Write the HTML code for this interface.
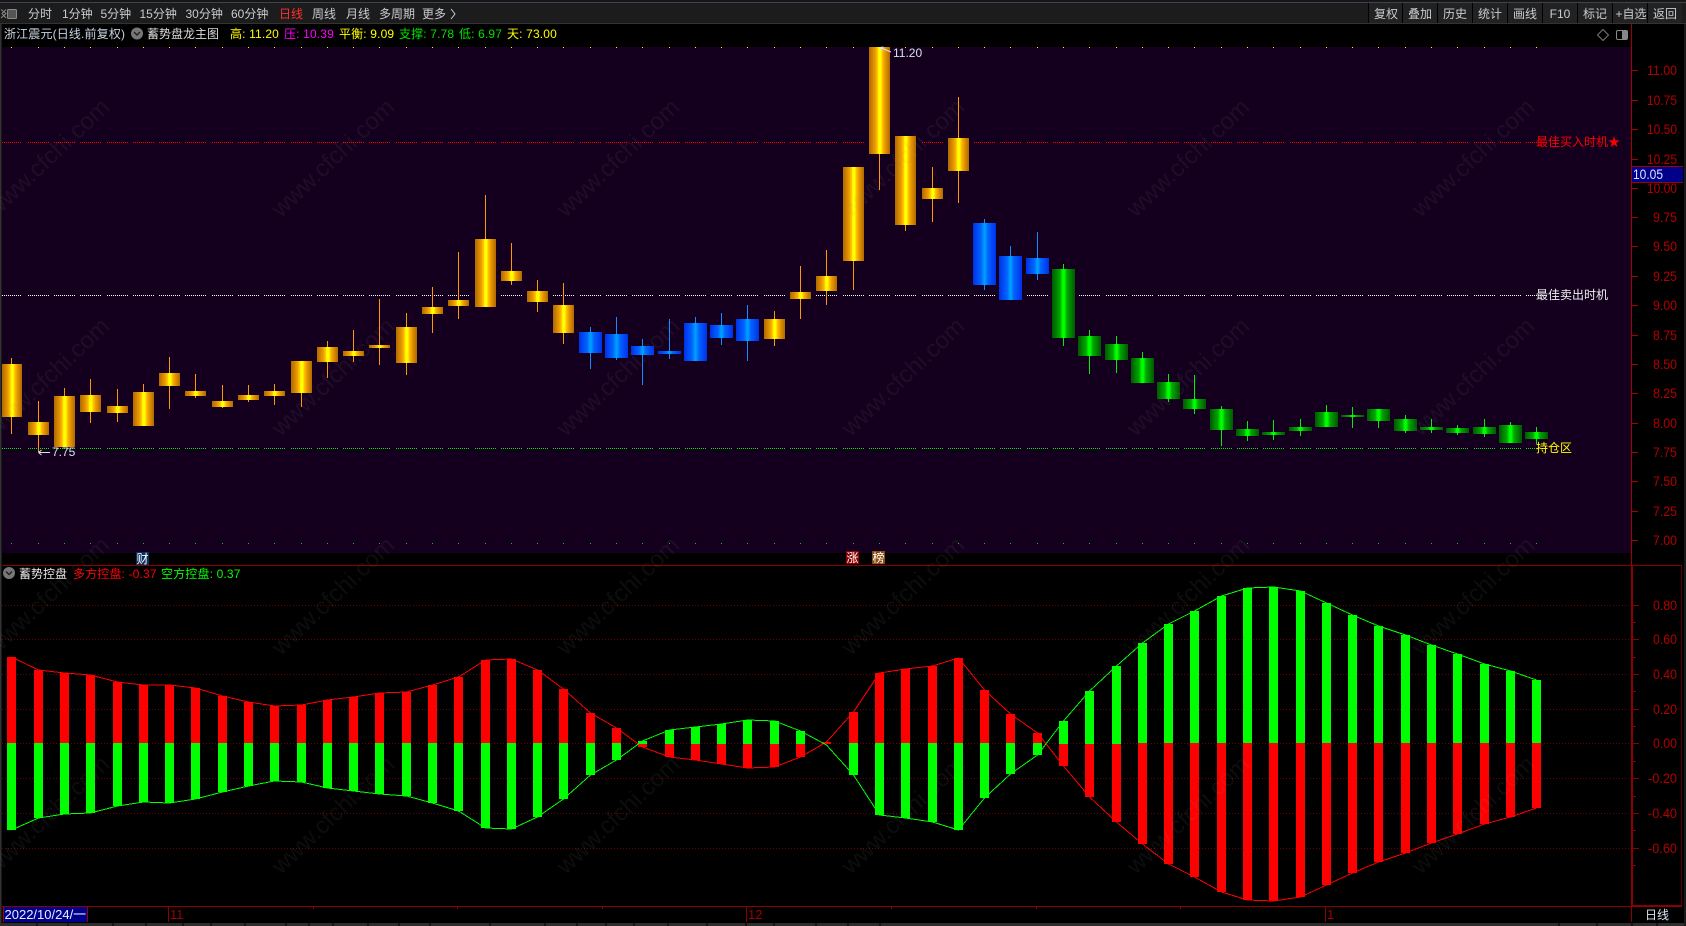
<!DOCTYPE html>
<html lang="zh-CN"><head><meta charset="utf-8"><title>浙江震元 K线</title>
<style>
html,body{margin:0;padding:0;background:#000;width:1686px;height:926px;overflow:hidden}
svg{display:block}
text{font-family:"Liberation Sans","Noto Sans CJK SC",sans-serif;font-size:12px}
.tb{fill:#c8ccd0}
.hd{letter-spacing:.15px}
.ax{fill:#b00000;font-size:14px;text-anchor:end}
.btn{fill:#c8ccd0;text-anchor:middle}
.wm text{font-size:24px;fill:rgba(140,140,140,.095);text-anchor:end}
</style></head><body>
<svg width="1686" height="926" viewBox="0 0 1686 926" xmlns="http://www.w3.org/2000/svg">
<defs>
<linearGradient id="o" x1="0" x2="1" y1="0" y2="0"><stop offset="0" stop-color="#b06800"/><stop offset=".28" stop-color="#e89800"/><stop offset=".4" stop-color="#ffc000"/><stop offset=".46" stop-color="#ffff00"/><stop offset=".56" stop-color="#ffff00"/><stop offset=".64" stop-color="#ffc000"/><stop offset=".76" stop-color="#e89800"/><stop offset="1" stop-color="#b06800"/></linearGradient>
<linearGradient id="b" x1="0" x2="1" y1="0" y2="0"><stop offset="0" stop-color="#0030e8"/><stop offset=".35" stop-color="#0064ff"/><stop offset=".5" stop-color="#00a4ff"/><stop offset=".65" stop-color="#0064ff"/><stop offset="1" stop-color="#0030e8"/></linearGradient>
<linearGradient id="g" x1="0" x2="1" y1="0" y2="0"><stop offset="0" stop-color="#005800"/><stop offset=".35" stop-color="#00a800"/><stop offset=".46" stop-color="#00ff00"/><stop offset=".54" stop-color="#00ff00"/><stop offset=".65" stop-color="#00a800"/><stop offset="1" stop-color="#005800"/></linearGradient>
<path id="seg" fill="none" stroke-dasharray="1 1" shape-rendering="crispEdges" d="M2 .5h20M28 .5h21M54 .5h21M80 .5h21M107 .5h21M133 .5h21M159 .5h21M185 .5h21M212 .5h21M238 .5h21M264 .5h21M291 .5h21M317 .5h21M343 .5h21M369 .5h21M396 .5h21M422 .5h21M448 .5h21M475 .5h21M501 .5h21M527 .5h21M553 .5h21M580 .5h21M606 .5h21M632 .5h21M659 .5h21M685 .5h21M711 .5h21M737 .5h21M764 .5h21M790 .5h21M816 .5h21M843 .5h21M869 .5h21M895 .5h21M922 .5h21M948 .5h21M974 .5h21M1000 .5h21M1027 .5h21M1053 .5h21M1079 .5h21M1106 .5h21M1132 .5h21M1158 .5h21M1184 .5h21M1211 .5h21M1237 .5h21M1263 .5h21M1290 .5h21M1316 .5h21M1342 .5h21M1368 .5h21M1395 .5h21M1421 .5h21M1447 .5h21M1474 .5h21M1500 .5h21M1526 .5h21"/>
<path id="dots" fill="none" shape-rendering="crispEdges" d="M11 .5h1M38 .5h1M64 .5h1M90 .5h1M117 .5h1M143 .5h1M169 .5h1M195 .5h1M222 .5h1M248 .5h1M274 .5h1M301 .5h1M327 .5h1M353 .5h1M379 .5h1M406 .5h1M432 .5h1M458 .5h1M485 .5h1M511 .5h1M537 .5h1M563 .5h1M590 .5h1M616 .5h1M642 .5h1M669 .5h1M695 .5h1M721 .5h1M747 .5h1M774 .5h1M800 .5h1M826 .5h1M853 .5h1M879 .5h1M905 .5h1M932 .5h1M958 .5h1M984 .5h1M1010 .5h1M1037 .5h1M1063 .5h1M1089 .5h1M1116 .5h1M1142 .5h1M1168 .5h1M1194 .5h1M1221 .5h1M1247 .5h1M1273 .5h1M1300 .5h1M1326 .5h1M1352 .5h1M1378 .5h1M1405 .5h1M1431 .5h1M1457 .5h1M1484 .5h1M1510 .5h1M1536 .5h1"/>
</defs>

<rect width="1686" height="926" fill="#000"/>
<!-- top toolbar -->
<rect y="0" width="1686" height="2" fill="#161616"/>
<rect y="2" width="1686" height="1" fill="#3a4550"/>
<rect y="3" width="1686" height="20" fill="#1c1c1c"/>
<rect y="23" width="1686" height="1" fill="#333"/>
<path d="M1 9.5l5 4-5 4.5M6 9.5l-4 4 4 4.5" fill="none" stroke="#8a8a8a"/>
<rect x="7.5" y="9.5" width="9" height="9" rx="1" fill="#555" stroke="#8a8a8a"/>
<text class="tb" x="28" y="18">分时</text>
<text class="tb" x="62" y="18">1分钟</text>
<text class="tb" x="100.5" y="18">5分钟</text>
<text class="tb" x="139.5" y="18">15分钟</text>
<text class="tb" x="185.5" y="18">30分钟</text>
<text class="tb" x="231" y="18">60分钟</text>
<text x="279" y="18" fill="#ff3030">日线</text>
<text class="tb" x="312" y="18">周线</text>
<text class="tb" x="346" y="18">月线</text>
<text class="tb" x="379" y="18">多周期</text>
<text class="tb" x="422" y="18">更多</text>
<path d="M451 9l4 5-4 5" fill="none" stroke="#c8ccd0"/>
<g fill="#222">
<rect x="1369" y="3" width="33" height="20"/><rect x="1403" y="3" width="34" height="20"/><rect x="1438" y="3" width="34" height="20"/><rect x="1473" y="3" width="34" height="20"/><rect x="1508" y="3" width="34" height="20"/><rect x="1543" y="3" width="34" height="20"/><rect x="1578" y="3" width="34" height="20"/><rect x="1613" y="3" width="34" height="20"/><rect x="1648" y="3" width="34" height="20"/>
</g>
<g fill="#000"><rect x="1368" y="3" width="1" height="20"/><rect x="1402" y="3" width="1" height="20"/><rect x="1437" y="3" width="1" height="20"/><rect x="1472" y="3" width="1" height="20"/><rect x="1507" y="3" width="1" height="20"/><rect x="1542" y="3" width="1" height="20"/><rect x="1577" y="3" width="1" height="20"/><rect x="1612" y="3" width="1" height="20"/><rect x="1647" y="3" width="1" height="20"/></g>
<text class="btn" x="1386" y="18">复权</text>
<text class="btn" x="1420" y="18">叠加</text>
<text class="btn" x="1455" y="18">历史</text>
<text class="btn" x="1490" y="18">统计</text>
<text class="btn" x="1525" y="18">画线</text>
<text class="btn" x="1560" y="18">F10</text>
<text class="btn" x="1595" y="18">标记</text>
<text class="btn" x="1631" y="18">+自选</text>
<text class="btn" x="1665" y="18">返回</text>

<!-- frame + panels -->
<rect x="0" y="24" width="1.5" height="902" fill="#333"/>
<rect x="2" y="47" width="1630" height="506" fill="#14001e"/>

<!-- header row -->
<text class="hd" x="4" y="38" fill="#c8d4e0">浙江震元(日线.前复权)</text>
<circle cx="137" cy="33.5" r="6" fill="#777"/><path d="M134 32l3 3 3-3" fill="none" stroke="#222" stroke-width="1.4"/>
<text x="147" y="38" fill="#dcdcdc">蓄势盘龙主图</text>
<text class="hd" x="230" y="38" fill="#ffff00">高: 11.20</text>
<text class="hd" x="284" y="38" fill="#ff00ff">压: 10.39</text>
<text class="hd" x="339" y="38" fill="#ffff00">平衡: 9.09</text>
<text class="hd" x="399" y="38" fill="#00e000">支撑: 7.78</text>
<text class="hd" x="459" y="38" fill="#00e000">低: 6.97</text>
<text class="hd" x="507" y="38" fill="#ffff00">天: 73.00</text>
<path d="M1603 29.5l5.5 5.5-5.5 5.5-5.5-5.5z" fill="none" stroke="#777"/>
<rect x="1616.5" y="30.5" width="11" height="9" rx="1.5" fill="none" stroke="#888"/><rect x="1622" y="31" width="5" height="8" fill="#888"/>

<!-- horizontal signal lines -->
<use href="#seg" y="142" stroke="#ff0000"/>
<use href="#seg" y="295" stroke="#ffffff"/>
<use href="#seg" y="448" stroke="#00f000"/>
<use href="#dots" y="47" stroke="#ffff00"/>
<use href="#dots" y="543" stroke="#00d000"/>

<!-- wicks -->
<path fill="none" stroke="#ff9900" d="M11.5 358V434M38.5 401V452M64.5 388V447M90.5 379V423M117.5 389V422M143.5 384V426M169.5 357V409M195.5 374V398M222.5 385V408M248.5 385V402M274.5 384V405M301.5 361V407M327.5 341V378M353.5 330V362M379.5 299V365M406.5 313V375M432.5 287V333M458.5 252V319M485.5 195V307M511.5 243V285M537.5 280V312M563.5 283V344M774.5 311V346M800.5 266V319M826.5 250V305M853.5 167V290M879.5 47V190M905.5 136V231M932.5 167V222M958.5 97V203"/>
<path fill="none" stroke="#0f8fff" d="M590.5 327V369M616.5 317V360M642.5 339V385M669.5 319V359M695.5 317V361M721.5 313V345M747.5 305V361M984.5 219V290M1010.5 246V300M1037.5 232V280"/>
<path fill="none" stroke="#00f000" d="M1063.5 264V346M1089.5 330V374M1116.5 336V373M1142.5 352V383M1168.5 374V402M1194.5 375V414M1221.5 406V446M1247.5 421V441M1273.5 420V440M1300.5 419V436M1326.5 405V427M1352.5 407V428M1378.5 409V428M1405.5 415V433M1431.5 419V433M1457.5 425V435M1484.5 419V437M1510.5 422V443M1536.5 427V444"/>

<!-- candle bodies -->
<g fill="url(#o)">
<rect x="2" y="364" width="20" height="53"/><rect x="28" y="422" width="21" height="13"/><rect x="54" y="396" width="21" height="51"/><rect x="80" y="395" width="21" height="17"/><rect x="107" y="406" width="21" height="7"/><rect x="133" y="392" width="21" height="34"/><rect x="159" y="373" width="21" height="13"/><rect x="185" y="391" width="21" height="5"/><rect x="212" y="401" width="21" height="6"/><rect x="238" y="395" width="21" height="5"/><rect x="264" y="391" width="21" height="5"/><rect x="291" y="361" width="21" height="32"/><rect x="317" y="347" width="21" height="15"/><rect x="343" y="351" width="21" height="5"/><rect x="369" y="345" width="21" height="3"/><rect x="396" y="327" width="21" height="36"/><rect x="422" y="307" width="21" height="7"/><rect x="448" y="300" width="21" height="6"/><rect x="475" y="239" width="21" height="68"/><rect x="501" y="271" width="21" height="10"/><rect x="527" y="291" width="21" height="11"/><rect x="553" y="305" width="21" height="28"/>
<rect x="764" y="319" width="21" height="20"/><rect x="790" y="292" width="21" height="7"/><rect x="816" y="276" width="21" height="15"/><rect x="843" y="167" width="21" height="94"/><rect x="869" y="47" width="21" height="107"/><rect x="895" y="136" width="21" height="89"/><rect x="922" y="188" width="21" height="11"/><rect x="948" y="138" width="21" height="33"/>
</g>
<g fill="url(#b)">
<rect x="579" y="332" width="23" height="21"/><rect x="605" y="334" width="23" height="24"/><rect x="631" y="346" width="23" height="9"/><rect x="658" y="351" width="23" height="3"/><rect x="684" y="323" width="23" height="38"/><rect x="710" y="325" width="23" height="13"/><rect x="736" y="319" width="23" height="22"/>
<rect x="973" y="223" width="23" height="62"/><rect x="999" y="256" width="23" height="44"/><rect x="1026" y="258" width="23" height="16"/>
</g>
<g fill="url(#g)">
<rect x="1052" y="269" width="23" height="69"/><rect x="1078" y="336" width="23" height="20"/><rect x="1105" y="344" width="23" height="16"/><rect x="1131" y="358" width="23" height="25"/><rect x="1157" y="382" width="23" height="17"/><rect x="1183" y="399" width="23" height="10"/><rect x="1210" y="409" width="23" height="21"/><rect x="1236" y="429" width="23" height="7"/><rect x="1262" y="432" width="23" height="3"/><rect x="1289" y="427" width="23" height="4"/><rect x="1315" y="412" width="23" height="15"/><rect x="1341" y="415" width="23" height="2"/><rect x="1367" y="409" width="23" height="12"/><rect x="1394" y="419" width="23" height="12"/><rect x="1420" y="427" width="23" height="3"/><rect x="1446" y="428" width="23" height="5"/><rect x="1473" y="427" width="23" height="7"/><rect x="1499" y="425" width="23" height="18"/><rect x="1525" y="432" width="23" height="7"/>
</g>

<!-- chart labels -->
<path fill="none" stroke="#d8e0f0" d="M38.5 452.5H50M38.5 452.5l3-2.5M38.5 452.5l3 2.5"/>
<text x="52" y="456" fill="#d8e0f0">7.75</text>
<path fill="none" stroke="#d8e0f0" d="M880 47.5L891 52M880 47.5l3.5-.5M880 47.5l1.5 3"/>
<text x="893" y="57" fill="#d8e0f0">11.20</text>
<text x="1536" y="146" fill="#ff0000">最佳买入时机★</text>
<text x="1536" y="299" fill="#f0f0f0">最佳卖出时机</text>
<text x="1536" y="452" fill="#ffff00">持仓区</text>

<!-- event tags -->
<rect x="136" y="552" width="13" height="13" fill="#0a3060"/><text x="136.5" y="563" fill="#fff">财</text>
<rect x="846" y="551" width="13" height="13" fill="#8b0000"/><text x="846.5" y="562" fill="#fff">涨</text>
<rect x="872" y="551" width="13" height="13" fill="#8b4a10"/><text x="872.5" y="562" fill="#fff">榜</text>

<!-- right axis upper -->
<g fill="#a00000" shape-rendering="crispEdges">
<rect x="1631" y="24" width="1" height="542"/>
<rect x="1632" y="70" width="6" height="1"/><rect x="1632" y="100" width="6" height="1"/><rect x="1632" y="129" width="6" height="1"/><rect x="1632" y="159" width="6" height="1"/><rect x="1632" y="188" width="6" height="1"/><rect x="1632" y="217" width="6" height="1"/><rect x="1632" y="246" width="6" height="1"/><rect x="1632" y="276" width="6" height="1"/><rect x="1632" y="305" width="6" height="1"/><rect x="1632" y="335" width="6" height="1"/><rect x="1632" y="364" width="6" height="1"/><rect x="1632" y="393" width="6" height="1"/><rect x="1632" y="423" width="6" height="1"/><rect x="1632" y="452" width="6" height="1"/><rect x="1632" y="481" width="6" height="1"/><rect x="1632" y="511" width="6" height="1"/><rect x="1632" y="540" width="6" height="1"/>
</g>
<text class="ax" x="1677" y="75" textLength="30" lengthAdjust="spacingAndGlyphs">11.00</text>
<text class="ax" x="1677" y="105" textLength="30" lengthAdjust="spacingAndGlyphs">10.75</text>
<text class="ax" x="1677" y="134" textLength="30" lengthAdjust="spacingAndGlyphs">10.50</text>
<text class="ax" x="1677" y="164" textLength="30" lengthAdjust="spacingAndGlyphs">10.25</text>
<text class="ax" x="1677" y="193" textLength="30" lengthAdjust="spacingAndGlyphs">10.00</text>
<text class="ax" x="1677" y="222" textLength="24" lengthAdjust="spacingAndGlyphs">9.75</text>
<text class="ax" x="1677" y="251" textLength="24" lengthAdjust="spacingAndGlyphs">9.50</text>
<text class="ax" x="1677" y="281" textLength="24" lengthAdjust="spacingAndGlyphs">9.25</text>
<text class="ax" x="1677" y="310" textLength="24" lengthAdjust="spacingAndGlyphs">9.00</text>
<text class="ax" x="1677" y="340" textLength="24" lengthAdjust="spacingAndGlyphs">8.75</text>
<text class="ax" x="1677" y="369" textLength="24" lengthAdjust="spacingAndGlyphs">8.50</text>
<text class="ax" x="1677" y="398" textLength="24" lengthAdjust="spacingAndGlyphs">8.25</text>
<text class="ax" x="1677" y="428" textLength="24" lengthAdjust="spacingAndGlyphs">8.00</text>
<text class="ax" x="1677" y="457" textLength="24" lengthAdjust="spacingAndGlyphs">7.75</text>
<text class="ax" x="1677" y="486" textLength="24" lengthAdjust="spacingAndGlyphs">7.50</text>
<text class="ax" x="1677" y="516" textLength="24" lengthAdjust="spacingAndGlyphs">7.25</text>
<text class="ax" x="1677" y="545" textLength="24" lengthAdjust="spacingAndGlyphs">7.00</text>
<rect x="1632" y="166" width="51" height="16" fill="#00008b"/>
<rect x="1632" y="166" width="51" height="1" fill="#a00000"/><rect x="1632" y="182" width="51" height="1" fill="#a00000"/>
<text x="1633" y="179" style="font-size:14px" fill="#d8e4ff" textLength="30" lengthAdjust="spacingAndGlyphs">10.05</text>

<!-- lower panel -->
<rect x="2" y="565" width="1680" height="1" fill="#8b0000"/>
<circle cx="9" cy="573" r="6" fill="#777"/><path d="M6 571.5l3 3 3-3" fill="none" stroke="#222" stroke-width="1.4"/>
<text x="19" y="578" fill="#e8e8e8">蓄势控盘</text>
<text class="hd" x="73" y="578" fill="#ff0000">多方控盘: -0.37</text>
<text class="hd" x="161" y="578" fill="#00ff00">空方控盘: 0.37</text>

<path fill="none" stroke="#700000" stroke-dasharray="1 2" shape-rendering="crispEdges" d="M2 605.5H1631M2 639.5H1631M2 674.5H1631M2 709.5H1631M2 743.5H1631M2 778.5H1631M2 813.5H1631M2 848.5H1631"/>

<!-- bars -->
<path fill="none" stroke="#ff0000" stroke-width="9" d="M11.5 657V743M38.5 670V743M64.5 673V743M90.5 675V743M117.5 682V743M143.5 685V743M169.5 685V743M195.5 688V743M222.5 696V743M248.5 702V743M274.5 706V743M301.5 705V743M327.5 700V743M353.5 697V743M379.5 693V743M406.5 692V743M432.5 685V743M458.5 677V743M485.5 660V743M511.5 659V743M537.5 670V743M563.5 689V743M590.5 713V743M616.5 728V743M642.5 744V747M669.5 744V757M695.5 744V760M721.5 744V764M747.5 744V768M774.5 744V767M800.5 744V757M826.5 742V744M853.5 712V743M879.5 673V743M905.5 669V743M932.5 666V743M958.5 658V743M984.5 690V743M1010.5 714V743M1037.5 733V743M1063.5 744V766M1089.5 744V797M1116.5 744V822M1142.5 743V844M1168.5 743V864M1194.5 743V877M1221.5 743V892M1247.5 743V900M1273.5 743V901M1300.5 743V897M1326.5 743V885M1352.5 743V873M1378.5 743V862M1405.5 743V853M1431.5 743V843M1457.5 743V834M1484.5 743V824M1510.5 743V817M1536.5 743V808"/>
<path fill="none" stroke="#00ff00" stroke-width="9" d="M11.5 743V830M38.5 743V818M64.5 743V814M90.5 743V813M117.5 743V806M143.5 743V802M169.5 743V803M195.5 743V799M222.5 743V792M248.5 743V786M274.5 743V781M301.5 743V782M327.5 743V788M353.5 743V791M379.5 743V794M406.5 743V796M432.5 743V803M458.5 743V811M485.5 743V828M511.5 743V829M537.5 743V817M563.5 743V799M590.5 743V775M616.5 743V760M642.5 741V744M669.5 730V744M695.5 727V744M721.5 724V744M747.5 720V744M774.5 721V744M800.5 731V744M853.5 743V775M879.5 743V815M905.5 743V818M932.5 743V822M958.5 743V830M984.5 743V798M1010.5 743V774M1037.5 743V755M1063.5 721V744M1089.5 691V744M1116.5 666V744M1142.5 643V743M1168.5 624V743M1194.5 611V743M1221.5 596V743M1247.5 588V743M1273.5 587V743M1300.5 591V743M1326.5 603V743M1352.5 615V743M1378.5 626V743M1405.5 635V743M1431.5 645V743M1457.5 654V743M1484.5 664V743M1510.5 671V743M1536.5 680V743"/>
<polyline fill="none" stroke="#ff0000" shape-rendering="crispEdges" points="11.5,657 38.5,670 64.5,673 90.5,675 117.5,682 143.5,685 169.5,685 195.5,688 222.5,696 248.5,702 274.5,706 301.5,705 327.5,700 353.5,697 379.5,693 406.5,692 432.5,685 458.5,677 485.5,660 511.5,659 537.5,670 563.5,689 590.5,713 616.5,728 642.5,747 669.5,757 695.5,760 721.5,764 747.5,768 774.5,767 800.5,757 826.5,742 853.5,712 879.5,673 905.5,669 932.5,666 958.5,658 984.5,690 1010.5,714 1037.5,733 1063.5,766 1089.5,797 1116.5,822 1142.5,844 1168.5,864 1194.5,877 1221.5,892 1247.5,900 1273.5,901 1300.5,897 1326.5,885 1352.5,873 1378.5,862 1405.5,853 1431.5,843 1457.5,834 1484.5,824 1510.5,817 1536.5,808"/>
<polyline fill="none" stroke="#00ff00" shape-rendering="crispEdges" points="11.5,830 38.5,818 64.5,814 90.5,813 117.5,806 143.5,802 169.5,803 195.5,799 222.5,792 248.5,786 274.5,781 301.5,782 327.5,788 353.5,791 379.5,794 406.5,796 432.5,803 458.5,811 485.5,828 511.5,829 537.5,817 563.5,799 590.5,775 616.5,760 642.5,741 669.5,730 695.5,727 721.5,724 747.5,720 774.5,721 800.5,731 826.5,745 853.5,775 879.5,815 905.5,818 932.5,822 958.5,830 984.5,798 1010.5,774 1037.5,755 1063.5,721 1089.5,691 1116.5,666 1142.5,643 1168.5,624 1194.5,611 1221.5,596 1247.5,588 1273.5,587 1300.5,591 1326.5,603 1352.5,615 1378.5,626 1405.5,635 1431.5,645 1457.5,654 1484.5,664 1510.5,671 1536.5,680"/>

<!-- right axis lower -->
<g fill="#8b0000" shape-rendering="crispEdges">
<rect x="1631" y="566" width="2" height="341"/>
<rect x="1681" y="566" width="1" height="341" fill="#5a0000"/>
<rect x="1632" y="565" width="50" height="1"/>
<rect x="2" y="906" width="1630" height="1"/>
<rect x="1632" y="905" width="50" height="2"/>
<rect x="1633" y="605" width="6" height="1"/><rect x="1633" y="639" width="6" height="1"/><rect x="1633" y="674" width="6" height="1"/><rect x="1633" y="709" width="6" height="1"/><rect x="1633" y="743" width="6" height="1"/><rect x="1633" y="778" width="6" height="1"/><rect x="1633" y="813" width="6" height="1"/><rect x="1633" y="848" width="6" height="1"/>
<rect x="1633" y="622" width="3" height="1"/><rect x="1633" y="657" width="3" height="1"/><rect x="1633" y="691" width="3" height="1"/><rect x="1633" y="726" width="3" height="1"/><rect x="1633" y="761" width="3" height="1"/><rect x="1633" y="796" width="3" height="1"/><rect x="1633" y="830" width="3" height="1"/><rect x="1633" y="865" width="3" height="1"/>
</g>
<text class="ax" x="1677" y="610" textLength="24" lengthAdjust="spacingAndGlyphs">0.80</text>
<text class="ax" x="1677" y="644" textLength="24" lengthAdjust="spacingAndGlyphs">0.60</text>
<text class="ax" x="1677" y="679" textLength="24" lengthAdjust="spacingAndGlyphs">0.40</text>
<text class="ax" x="1677" y="714" textLength="24" lengthAdjust="spacingAndGlyphs">0.20</text>
<text class="ax" x="1677" y="748" textLength="24" lengthAdjust="spacingAndGlyphs">0.00</text>
<text class="ax" x="1677" y="783" textLength="29" lengthAdjust="spacingAndGlyphs">-0.20</text>
<text class="ax" x="1677" y="818" textLength="29" lengthAdjust="spacingAndGlyphs">-0.40</text>
<text class="ax" x="1677" y="853" textLength="29" lengthAdjust="spacingAndGlyphs">-0.60</text>

<!-- time axis -->
<rect x="3" y="907" width="85" height="15" fill="#00008b"/>
<rect x="3" y="907" width="1" height="15" fill="#a00000"/><rect x="87" y="907" width="1" height="15" fill="#a00000"/>
<text x="4.5" y="919" style="font-size:13px" fill="#e8ecff">2022/10/24/一</text>
<g fill="#8b0000">
<rect x="168" y="907" width="1" height="15"/><rect x="746" y="907" width="1" height="15"/><rect x="1325" y="907" width="1" height="15"/>
<rect x="313" y="907" width="1" height="2"/><rect x="457" y="907" width="1" height="2"/><rect x="602" y="907" width="1" height="2"/><rect x="891" y="907" width="1" height="2"/><rect x="1036" y="907" width="1" height="2"/><rect x="1180" y="907" width="1" height="2"/>
<rect x="1631" y="907" width="1" height="15"/>
</g>
<text x="170" y="919" style="font-size:13px" fill="#a00000">11</text>
<text x="748" y="919" style="font-size:13px" fill="#a00000">12</text>
<text x="1327" y="919" style="font-size:13px" fill="#a00000">1</text>
<text x="1645" y="919" fill="#d8e4f4">日线</text>

<!-- bottom strip -->
<rect y="923" width="1686" height="3" fill="#2d2d2d"/>
<path fill="none" stroke="#000" shape-rendering="crispEdges" d="M37 923v3M68 923v3M113 923v3M146 923v3M183 923v3M211 923v3M245 923v3M286 923v3M309 923v3M333 923v3M368 923v3M399 923v3M430 923v3M490 923v3M545 923v3M577 923v3M606 923v3M634 923v3M668 923v3M707 923v3M746 923v3M774 923v3M816 923v3M848 923v3M880 923v3M1559 923v3M1597 923v3M1632 923v3M1657 923v3"/>
<rect x="1684" y="24" width="2" height="902" fill="#1a1a1a"/>

<!-- watermark -->
<g class="wm">
<text transform="translate(111 109) rotate(-43.5)">www.cfchi.com</text><text transform="translate(396 109) rotate(-43.5)">www.cfchi.com</text><text transform="translate(681 109) rotate(-43.5)">www.cfchi.com</text><text transform="translate(966 109) rotate(-43.5)">www.cfchi.com</text><text transform="translate(1251 109) rotate(-43.5)">www.cfchi.com</text><text transform="translate(1536 109) rotate(-43.5)">www.cfchi.com</text>
<text transform="translate(111 328) rotate(-43.5)">www.cfchi.com</text><text transform="translate(396 328) rotate(-43.5)">www.cfchi.com</text><text transform="translate(681 328) rotate(-43.5)">www.cfchi.com</text><text transform="translate(966 328) rotate(-43.5)">www.cfchi.com</text><text transform="translate(1251 328) rotate(-43.5)">www.cfchi.com</text><text transform="translate(1536 328) rotate(-43.5)">www.cfchi.com</text>
<text transform="translate(111 547) rotate(-43.5)">www.cfchi.com</text><text transform="translate(396 547) rotate(-43.5)">www.cfchi.com</text><text transform="translate(681 547) rotate(-43.5)">www.cfchi.com</text><text transform="translate(966 547) rotate(-43.5)">www.cfchi.com</text><text transform="translate(1251 547) rotate(-43.5)">www.cfchi.com</text><text transform="translate(1536 547) rotate(-43.5)">www.cfchi.com</text>
<text transform="translate(111 766) rotate(-43.5)">www.cfchi.com</text><text transform="translate(396 766) rotate(-43.5)">www.cfchi.com</text><text transform="translate(681 766) rotate(-43.5)">www.cfchi.com</text><text transform="translate(966 766) rotate(-43.5)">www.cfchi.com</text><text transform="translate(1251 766) rotate(-43.5)">www.cfchi.com</text><text transform="translate(1536 766) rotate(-43.5)">www.cfchi.com</text>
</g>
</svg>
</body></html>
